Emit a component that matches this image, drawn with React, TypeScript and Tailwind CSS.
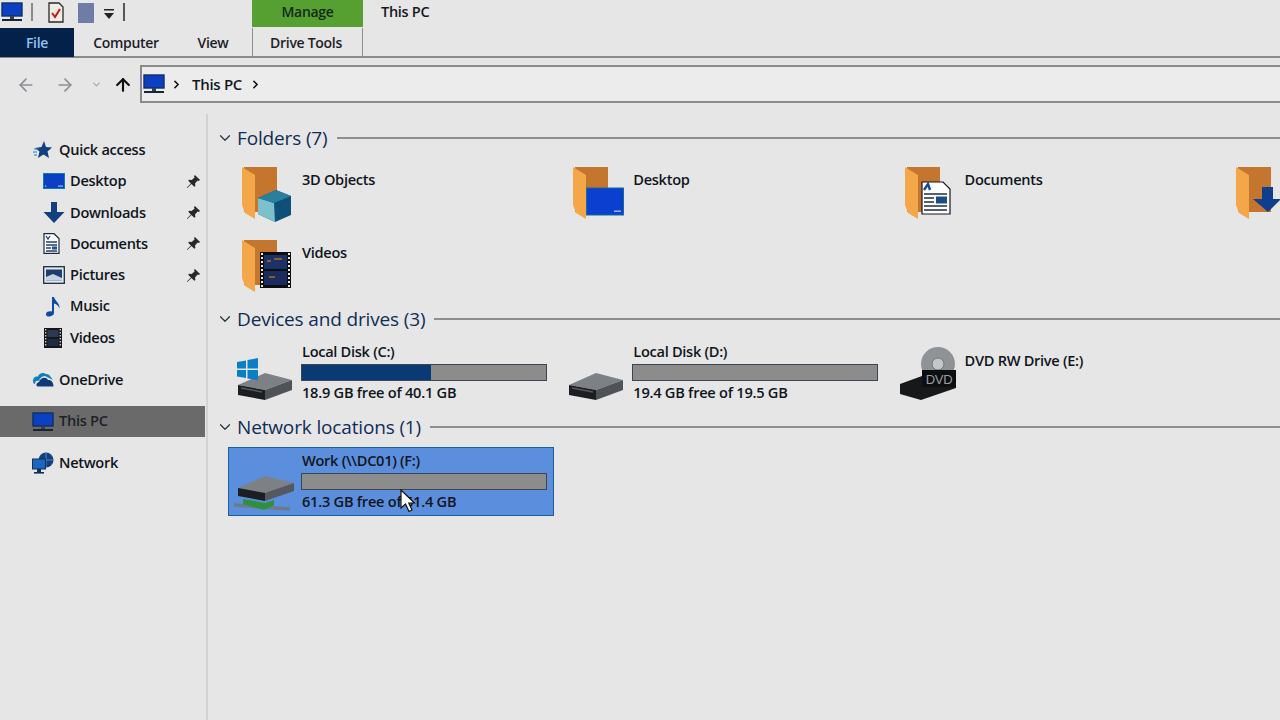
import React from "react";
import { ArrowLeft, ArrowRight, ArrowUp, ChevronDown, ChevronRight } from "lucide-react";

const Monitor = ({ className = "" }: { className?: string }) => (
  <svg viewBox="0 0 22 20" className={className}>
    <rect x="1" y="1" width="20" height="13" fill="#0b3fc4" stroke="#12305e" strokeWidth="1.4" />
    <rect x="9" y="14" width="4" height="3" fill="#33404f" />
    <rect x="1" y="17" width="20" height="2" fill="#1b2430" />
  </svg>
);

const Pin = () => (
  <svg viewBox="0 0 16 16" className="w-[15px] h-[15px]">
    <path d="M9.5 1 L15 6.5 L13.5 7.5 L12.4 6.8 L9.6 10 L10 12.8 L8.8 13.6 L5.8 10.6 L1.5 15 L1 14.5 L5.2 10 L2.4 7.2 L3.2 6 L6 6.4 L9.2 3.6 L8.5 2.4 Z" fill="#26282b" />
  </svg>
);

const NavIcon = ({ name }: { name: string }) => {
  switch (name) {
    case "star":
      return (
        <svg viewBox="0 0 20 20" className="w-[20px] h-[20px]">
          <path d="M12 1 L14 7 L20 7.5 L15.5 11.5 L17 18 L11.5 14.5 L6 18 L7.5 11.5 L3 8 L9.5 7 Z" fill="#123f80" />
          <path d="M2 9h5M1 12h4M2 15h3" stroke="#2a78c4" strokeWidth="1.2" />
        </svg>
      );
    case "desktop":
      return (
        <svg viewBox="0 0 22 16" className="w-[22px] h-[16px]">
          <rect x="0.5" y="0.5" width="21" height="15" fill="#0b3fc4" stroke="#0e7fa8" />
          <rect x="15" y="12.5" width="5" height="1.2" fill="#9fc0ea" />
          <rect x="2" y="12.5" width="1.4" height="1.2" fill="#9fc0ea" />
        </svg>
      );
    case "down":
      return (
        <svg viewBox="0 0 22 21" className="w-[22px] h-[21px]">
          <path d="M8 0 H14 V10 H21.5 L11 21 L0.5 10 H8 Z" fill="#123f80" />
        </svg>
      );
    case "doc":
      return (
        <svg viewBox="0 0 17 21" className="w-[17px] h-[21px]">
          <path d="M1 .7 H11 L16 5.5 V20.3 H1 Z" fill="#fff" stroke="#1c2a3a" strokeWidth="1.2" />
          <path d="M3 3l2 3 2-3M3 9h11M3 12h11M3 15h5M3 18h11" stroke="#1f3f6e" strokeWidth="1.3" fill="none" />
          <rect x="9" y="13.5" width="5" height="3" fill="#1f4f86" />
        </svg>
      );
    case "pic":
      return (
        <svg viewBox="0 0 22 18" className="w-[22px] h-[18px]">
          <rect x=".7" y=".7" width="20.6" height="16.6" fill="#dfe9f2" stroke="#1d2b3c" strokeWidth="1.3" />
          <rect x="3" y="3.5" width="16" height="11" fill="#1d3f70" />
          <path d="M3 11 L10 8 L19 12 V14.5 H3 Z" fill="#c6d3e0" />
        </svg>
      );
    case "music":
      return (
        <svg viewBox="0 0 16 21" className="w-[16px] h-[21px] ml-[2px]">
          <path d="M7 1 H9 C10 5 15 7 14.5 12.5 C13.5 9.5 11 8 9 7.5 V17 C9 19.5 5.5 20.8 3 20.5 C0.5 20 .3 17 2.5 15.8 C4 15 6 15 7 15.6 Z" fill="#0f4aa8" />
        </svg>
      );
    case "video":
      return (
        <svg viewBox="0 0 18 20" className="w-[18px] h-[20px] ml-[1px]">
          <rect width="18" height="20" fill="#14161a" />
          <rect x="3.5" y="2" width="11" height="7" fill="#2b3a4e" />
          <rect x="3.5" y="11" width="11" height="7" fill="#1d2c42" />
          <path d="M1.7 1v18M16.3 1v18" stroke="#cfd4da" strokeWidth="1.3" strokeDasharray="1.5 1.5" />
        </svg>
      );
    case "cloud":
      return (
        <svg viewBox="0 0 22 15" className="w-[22px] h-[15px]">
          <path d="M1 9 C1 5 4 4 6 4.5 C7 1 11 0 14 2 C17 1.5 19 5 21 8 L13 4 C9 4 7 8 7 9 C4 8 3 10 3 12 C1.5 12 1 10 1 9 Z" fill="#0e7fc0" />
          <path d="M6 14.5 C4 14.5 3.5 11 7 10 C8 6 14 4 16 8 C19 7.5 21.5 10 21.5 14.5 Z" fill="#103a78" />
        </svg>
      );
    case "pc":
      return <Monitor className="w-[22px] h-[20px]" />;
    default:
      return (
        <svg viewBox="0 0 22 22" className="w-[22px] h-[22px]">
          <circle cx="14" cy="8" r="7.5" fill="#123f80" />
          <path d="M14 .5V15.5M6.5 8H21.5" stroke="#4e86c6" strokeWidth="1" />
          <rect x="0.5" y="7" width="13" height="10" fill="#1d66c0" stroke="#123058" />
          <rect x="5" y="17" width="4" height="3" fill="#123058" />
          <rect x="2" y="20" width="10" height="1.6" fill="#123058" />
        </svg>
      );
  }
};

const navItems = [
  { name: "Desktop", icon: "desktop", pin: true },
  { name: "Downloads", icon: "down", pin: true },
  { name: "Documents", icon: "doc", pin: true },
  { name: "Pictures", icon: "pic", pin: true },
  { name: "Music", icon: "music", pin: false },
  { name: "Videos", icon: "video", pin: false },
];

const TopNav = ({ name, icon, sel = false, cls = "" }: { name: string; icon: string; sel?: boolean; cls?: string }) => (
  <div className={`h-[31px] flex items-center ${sel ? "bg-[#6a6a6a] text-[#1d2126] w-[205px]" : "text-[#10151c]"} ${cls}`}>
    <div className="w-[59px] pl-[32px] flex items-center shrink-0">
      <NavIcon name={icon} />
    </div>
    <span className={sel ? "-mt-[2px]" : ""}>{name}</span>
  </div>
);

const FolderOverlay = ({ kind }: { kind: string }) => {
  if (kind === "cube")
    return (
      <g>
        <path d="M17 33 L35 25 L50 31 L50 50 L34 57 L17 49 Z" fill="#0f5078" />
        <path d="M17 33 L33 38 L34 57 L17 49 Z" fill="#7cc0cc" />
        <path d="M17 33 L35 25 L50 31 L33 38 Z" fill="#2b7f9e" />
      </g>
    );
  if (kind === "desktop")
    return (
      <g>
        <rect x="14.5" y="23" width="37" height="27" fill="#0b3fd0" stroke="#0e6f98" />
        <rect x="42" y="45.5" width="7" height="1.4" fill="#9fc0ea" />
      </g>
    );
  if (kind === "doc")
    return (
      <g>
        <path d="M18 17 H39 L46 24 V49 H18 Z" fill="#fff" stroke="#10161e" strokeWidth="1.2" />
        <path d="M20 25 L24 19 L26 25" stroke="#134a96" strokeWidth="2.4" fill="none" />
        <path d="M20 29H43M20 33H30M20 37H30M20 41H43M20 45H43" stroke="#1a2c40" strokeWidth="1.4" />
        <rect x="32" y="31.5" width="11" height="7" fill="#1e4d80" />
      </g>
    );
  if (kind === "down")
    return <path d="M27 22 H38 V34 H46 L33 47 L18 34 H27 Z" fill="#0f3f8c" />;
  return (
    <g>
      <rect x="19" y="14" width="31" height="36" fill="#0c0e12" />
      <rect x="23" y="17" width="23" height="14" fill="#1d3264" />
      <rect x="23" y="33" width="23" height="14" fill="#1a2c5c" />
      <path d="M26 23h4M33 21h8M28 39h6" stroke="#b06a2a" strokeWidth="1.6" />
      <path d="M21 15v35M48 15v35" stroke="#e8e8e8" strokeWidth="2" strokeDasharray="2 2" />
    </g>
  );
};

const Folder = ({ kind }: { kind: string }) => (
  <svg viewBox="0 0 52 62" className="w-[52px] h-[62px] shrink-0 ml-[13px]">
    <rect x="3" y="2" width="33" height="45" fill="#c4752e" />
    <path d="M1 2 L14 10 V54 L4 48 L1 40 Z" fill="#f3a748" />
    <FolderOverlay kind={kind} />
  </svg>
);

const folders = [
  { name: "3D Objects", kind: "cube" },
  { name: "Desktop", kind: "desktop" },
  { name: "Documents", kind: "doc" },
  { name: "", kind: "down" },
  { name: "Videos", kind: "video" },
];

const Heading = ({ title }: { title: string }) => (
  <div className="h-[24px] flex items-center text-[19px] font-medium text-[#0f2d55] tracking-[-0.15px]">
    <ChevronDown className="w-[18px] h-[18px] shrink-0 text-[#2a3442]" strokeWidth={1.6} />
    <span className="ml-[3px] whitespace-nowrap">{title}</span>
    <div className="ml-[9px] h-[2px] flex-1 bg-[#8e8e8e]" />
  </div>
);

const Drive = ({ kind }: { kind: string }) => {
  const body = (
    <g>
      <path d="M10 47 L37 35 L64 42 L37 52 Z" fill="#7d8186" />
      <path d="M10 47 L37 52 V62 L10 57 Z" fill="#1c1e21" />
      <path d="M37 52 L64 42 V52 L37 62 Z" fill="#4f5256" />
      <path d="M13 50 L34 54" stroke="#55585c" strokeWidth="1.5" />
    </g>
  );
  return (
    <svg viewBox="0 0 74 69" className="w-[74px] h-[69px] shrink-0">
      {kind === "win" && (
        <g>
          {body}
          <path d="M9 24 L18 22.5 V30.5 H9 Z M19.5 22 L30 20 V30.5 H19.5 Z M9 32 H18 V40 L9 38.5 Z M19.5 32 H30 V42 L19.5 40.5 Z" fill="#0a7fc6" />
        </g>
      )}
      {kind === "plain" && body}
      {kind === "dvd" && (
        <g>
          <circle cx="47" cy="26" r="17" fill="#8f9396" />
          <circle cx="47" cy="26" r="6" fill="#c4c7c9" stroke="#70747a" />
          <path d="M9 46 L31 38 H65 V50 L30 62 L9 56 Z" fill="#17181a" />
          <rect x="31" y="32" width="34" height="17" fill="#0d0e10" />
          <text x="48" y="46" textAnchor="middle" fontSize="13" fontWeight="400" fill="#9a9da2" fontFamily="'Liberation Sans', sans-serif">DVD</text>
        </g>
      )}
      {kind === "net" && (
        <g>
          <path d="M6 58 L62 62" stroke="#6b7b88" strokeWidth="3.5" />
          <g transform="translate(0,-6)">
            <path d="M10 47 L37 35 L66 42 L37 52 Z" fill="#7d8186" />
            <path d="M10 47 L37 52 V60 L10 55 Z" fill="#1c1e21" />
            <path d="M37 52 L66 42 V50 L37 60 Z" fill="#55585c" />
          </g>
          <path d="M15 52 L37 56 L46 53 V58 L36 63 L15 57 Z" fill="#2f8f3a" />
        </g>
      )}
    </svg>
  );
};

const Bar = ({ used }: { used: number }) => (
  <div className="w-[246px] h-[17px] flex border border-[#3d4650] bg-[#8c8c8c]">
    {used > 0 && <div className="h-full bg-[#0a3a73]" style={{ width: `${used}%` }} />}
  </div>
);

const DriveTile = ({ name, free, used, kind }: { name: string; free: string; used: number; kind: string }) => (
  <div className="w-[331.3px] h-[69px] flex shrink-0 text-[#10151c]">
    <Drive kind={kind} />
    <div className="w-[252px] pt-[3px] -ml-px">
      <div className="h-[21px] pl-px leading-[21px] whitespace-nowrap">{name}</div>
      <div className="mt-[2px]"><Bar used={used} /></div>
      <div className="mt-[1px] h-[21px] pl-px leading-[21px] whitespace-nowrap tracking-[-0.25px]">{free}</div>
    </div>
  </div>
);

export default function App() {
  return (
    <div
      className="relative w-[1280px] h-[720px] overflow-hidden bg-[#e6e6e6] text-[14.6px] font-semibold text-[#10151c] tracking-[-0.3px]"
      style={{ fontFamily: "'Open Sans', 'Noto Sans', sans-serif" }}
    >
      {/* Title row */}
      <div className="h-[28px] flex items-start">
        <Monitor className="w-[22px] h-[20px] mt-[2px] ml-[1px]" />
        <div className="ml-[8px] mt-[3px] w-[2px] h-[18px] bg-[#8a8a8a]" />
        <svg viewBox="0 0 16 21" className="ml-[15px] mt-[2px] w-[16px] h-[21px]">
          <path d="M1 1H11L15 5V20H1Z" fill="#f2ece4" stroke="#2a2a2a" strokeWidth="1.3" />
          <path d="M4 11L7 15L12 7" stroke="#c01a1a" strokeWidth="2" fill="none" />
        </svg>
        <div className="ml-[14px] mt-[3px] w-[16px] h-[20px] bg-[#6e7da8]" />
        <svg viewBox="0 0 10 10" className="ml-[10px] mt-[9px] w-[10px] h-[10px]">
          <rect x="0" y="0" width="10" height="1.5" fill="#222" />
          <path d="M0 4H10L5 10Z" fill="#222" />
        </svg>
        <div className="ml-[9px] mt-[3px] w-[2px] h-[18px] bg-[#555]" />
        <div className="ml-[127px] w-[111px] h-[27px] bg-[#56a032] flex items-center justify-center text-[14px] pb-[5px] text-[#132a1a]">Manage</div>
        <span className="ml-[18px] mt-[1px] font-semibold text-[14.5px] text-[#15181c]">This PC</span>
      </div>
      {/* Tabs row */}
      <div className="h-[30px] flex border-b-2 border-[#8a8a8a] text-[14px] font-semibold">
        <div className="w-[74px] h-[29px] bg-[#04214a] text-[#8fc4ef] flex items-center justify-center">File</div>
        <div className="w-[104px] flex items-center justify-center text-[#1c2126]">Computer</div>
        <div className="w-[70px] flex items-center justify-center text-[#1c2126]">View</div>
        <div className="ml-[4px] w-[111px] pr-[3px] flex items-center justify-center border-x border-[#8f8f8f] text-[#1c2126]">Drive Tools</div>
      </div>
      {/* Address row */}
      <div className="h-[56px] flex items-start">
        <div className="w-[140px] h-[52px] flex items-center shrink-0 pt-[1px]">
          <ArrowLeft className="ml-[16px] w-[20px] h-[20px] text-[#8b8f94]" strokeWidth={2} />
          <ArrowRight className="ml-[19px] w-[20px] h-[20px] text-[#8b8f94]" strokeWidth={2} />
          <ChevronDown className="ml-[16px] w-[11px] h-[11px] text-[#a5a8ab]" strokeWidth={3} />
          <ArrowUp className="ml-[11px] w-[20px] h-[20px] text-[#111]" strokeWidth={2.6} />
        </div>
        <div className="mt-[7px] flex-1 h-[38px] border-y-2 border-l-2 border-[#8a8a8a] flex items-center bg-[#ececec]">
          <Monitor className="ml-[1px] w-[22px] h-[20px]" />
          <ChevronRight className="ml-[5px] w-[13px] h-[13px] text-[#111]" strokeWidth={3} />
          <span className="ml-[9px] text-[15px] text-[#14181e]">This PC</span>
          <ChevronRight className="ml-[7px] w-[13px] h-[13px] text-[#111]" strokeWidth={3} />
        </div>
      </div>
      {/* Main */}
      <div className="flex h-[606px]">
        <div className="w-[208px] shrink-0 border-r-2 border-[#d2d2d2] pt-[20.5px]">
          <TopNav name="Quick access" icon="star" />
          {navItems.map((n) => (
            <div key={n.name} className="h-[31.3px] flex items-center">
              <div className="w-[70px] pl-[43px] flex items-center shrink-0">
                <NavIcon name={n.icon} />
              </div>
              <span className="w-[116px]">{n.name}</span>
              {n.pin && <Pin />}
            </div>
          ))}
          <TopNav name="OneDrive" icon="cloud" cls="mt-[11px]" />
          <TopNav name="This PC" icon="pc" sel cls="mt-[11px]" />
          <TopNav name="Network" icon="net" cls="mt-[10px]" />
        </div>
        <div className="flex-1 min-w-0 pt-[12px] pl-[20px]">
          <div className="-ml-[12px]">
            <Heading title="Folders (7)" />
          </div>
          <div className="mt-[15px] h-[142px] w-[1400px] flex flex-wrap content-start">
            {folders.map((f) => (
              <div key={f.kind} className="h-[73px] flex shrink-0 w-[331.3px]">
                <Folder kind={f.kind} />
                {f.name && <span className="ml-[9px] mt-[4px] leading-[21px] whitespace-nowrap">{f.name}</span>}
              </div>
            ))}
          </div>
          <div className="-ml-[12px]">
            <Heading title="Devices and drives (3)" />
          </div>
          <div className="mt-[7px] flex w-[1100px]">
            <DriveTile name="Local Disk (C:)" free="18.9 GB free of 40.1 GB" used={53} kind="win" />
            <DriveTile name="Local Disk (D:)" free="19.4 GB free of 19.5 GB" used={0} kind="plain" />
            <div className="w-[331px] h-[69px] flex shrink-0">
              <Drive kind="dvd" />
              <span className="mt-[12px] leading-[21px] whitespace-nowrap">DVD RW Drive (E:)</span>
            </div>
          </div>
          <div className="-ml-[12px] mt-[8px]">
            <Heading title="Network locations (1)" />
          </div>
          <div className="mt-[8px] w-[326px] h-[69px] bg-[#5b8fdd] border border-[#17609c] overflow-hidden">
            <div className="-m-px">
              <DriveTile name="Work (\\DC01) (F:)" free="61.3 GB free of 61.4 GB" used={0} kind="net" />
            </div>
          </div>
        </div>
      </div>
      {/* Cursor */}
      <svg viewBox="0 0 16 24" className="absolute left-[400px] top-[489px] w-[16px] h-[24px]">
        <path d="M1 1 V19 L5.5 15 L9 22.5 L12 21 L8.8 14 L14.5 14 Z" fill="#fff" stroke="#111" strokeWidth="1.2" />
      </svg>
    </div>
  );
}
